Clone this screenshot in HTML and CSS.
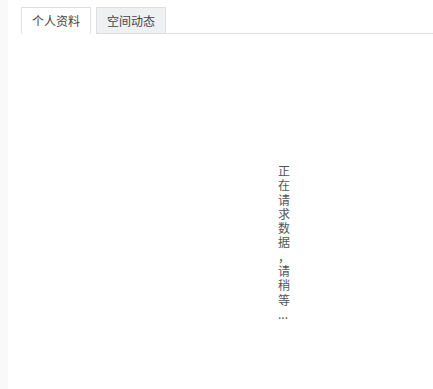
FILE: index.html
```html
<!DOCTYPE html>
<html lang="zh-CN">
<head>
    <meta charset="UTF-8">
    <meta name="viewport" content="width=device-width, initial-scale=1.0">
    <title>个人资料</title>
    <link rel="stylesheet" href="styles.css">
</head>
<body>
    <div class="page">
        <div class="tabbar">
            <ul class="tabs">
                <li class="tab active">个人资料</li>
                <li class="tab">空间动态</li>
            </ul>
            <div class="tabline"></div>
        </div>
        <div class="panel">
            <!-- 数据加载中 -->
            <p class="loading">正在请求数据，请稍等...</p>
        </div>
    </div>
</body>
</html>
```

FILE: styles.css
```css
body {
    margin: 0;
    background-color: #f9f9f9;
    font-family: "Noto Sans CJK SC", "Microsoft YaHei", sans-serif;
    font-size: 12px;
    color: #333;
}
.page {
    margin-left: 8px;
    min-height: 389px;
    background-color: #fff;
    padding-top: 7px;
    box-sizing: border-box;
}
.tabbar {
    display: flex;
    align-items: flex-end;
    padding-left: 13px;
}
.tabs {
    display: flex;
    gap: 5px;
    list-style: none;
    margin: 0;
    padding: 0;
}
.tab {
    padding: 0 10px;
    height: 25px;
    line-height: 25px;
    border: 1px solid #dcdfe3;
    border-bottom: 1px solid #dcdfe3;
    background-color: #eef0f2;
    color: #444;
}
.tab.active {
    background-color: #fff;
    border-bottom-color: #fff;
}
.tabline {
    flex: 1;
    border-bottom: 1px solid #dcdfe3;
}
.panel {
    padding-top: 130px;
}
.loading {
    width: 12px;
    margin: 0 0 0 270px;
    line-height: 14.3px;
    color: #555;
    word-break: break-all;
    line-break: anywhere;
}
```
